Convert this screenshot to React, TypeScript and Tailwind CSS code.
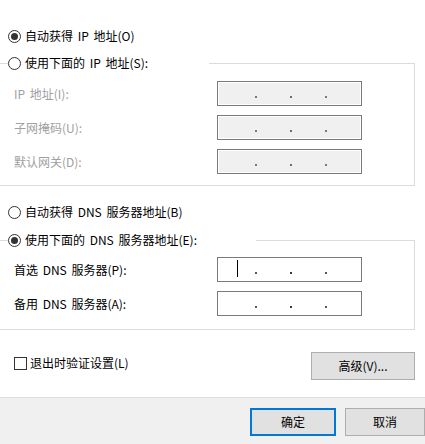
import React from "react";

function Radio({ checked }: { checked?: boolean }) {
  return (
    <span className="flex h-[13px] w-[13px] shrink-0 items-center justify-center rounded-full border border-[#333333] bg-white">
      {checked && <span className="h-[7px] w-[7px] rounded-full bg-[#333333]" />}
    </span>
  );
}

function RadioRow({ checked, label }: { checked?: boolean; label: string }) {
  return (
    <div className="flex h-[18px] items-center gap-[4px] bg-white text-[12px] leading-[18px] text-black">
      <Radio checked={checked} />
      <span className="[word-spacing:2px]">{label}</span>
    </div>
  );
}

function IPBox({ disabled, cursor }: { disabled?: boolean; cursor?: boolean }) {
  if (disabled) {
    return (
      <div className="h-[25px] w-[145px] border border-[#7a7a7a]">
        <div className="flex h-full w-full items-start border border-white bg-[#f0f0f0] pt-[13px]">
          <span className="ml-[36px] h-[2px] w-[2px] bg-[#6b7c8f]" />
          <span className="ml-[33px] h-[2px] w-[2px] bg-[#6b6b7c]" />
          <span className="ml-[33px] h-[2px] w-[2px] bg-[#6b7c8f]" />
        </div>
      </div>
    );
  }
  return (
    <div className="relative flex h-[25px] w-[145px] items-start border border-[#7a7a7a] bg-white pt-[14px]">
      {cursor && <span className="absolute left-[19px] top-[2px] h-[17px] w-[1px] bg-black" />}
      <span className="ml-[37px] h-[2px] w-[2px] bg-[#4a5a70]" />
      <span className="ml-[33px] h-[2px] w-[2px] bg-[#3a3050]" />
      <span className="ml-[33px] h-[2px] w-[2px] bg-[#4a5a70]" />
    </div>
  );
}

function FieldRow({
  label,
  disabled,
  cursor,
}: {
  label: string;
  disabled?: boolean;
  cursor?: boolean;
}) {
  return (
    <div className="flex items-center pl-[14px]">
      <span
        className={
          "w-[203px] text-[12px] leading-[18px] [word-spacing:2px] " +
          (disabled ? "text-[#a0a0a0]" : "text-black")
        }
      >
        {label}
      </span>
      <IPBox disabled={disabled} cursor={cursor} />
    </div>
  );
}

export default function App() {
  return (
    <div className="flex h-[444px] w-[425px] flex-col overflow-hidden bg-white font-['Microsoft_YaHei_UI','Noto_Sans_CJK_SC',sans-serif] text-[12px]">
      <div className="flex flex-1 flex-col">
        <div className="mt-[27px] pl-[8px]">
          <RadioRow checked label="自动获得 IP 地址(O)" />
        </div>

        <fieldset className="mt-[9px] w-[415px] border border-l-0 border-[#dcdcdc] px-0 pb-[11px] pt-0">
          <legend className="ml-[8px] w-[201px] p-0">
            <RadioRow label="使用下面的 IP 地址(S):" />
          </legend>
          <div className="flex flex-col gap-[9px] pt-[9px]">
            <FieldRow label="IP 地址(I):" disabled />
            <FieldRow label="子网掩码(U):" disabled />
            <FieldRow label="默认网关(D):" disabled />
          </div>
        </fieldset>

        <div className="mt-[17px] pl-[8px]">
          <RadioRow label="自动获得 DNS 服务器地址(B)" />
        </div>

        <fieldset className="mt-[10px] w-[415px] border border-l-0 border-[#dcdcdc] px-0 pb-[13px] pt-0">
          <legend className="ml-[8px] w-[248px] p-0">
            <RadioRow checked label="使用下面的 DNS 服务器地址(E):" />
          </legend>
          <div className="flex flex-col gap-[9px] pt-[8px]">
            <FieldRow label="首选 DNS 服务器(P):" cursor />
            <FieldRow label="备用 DNS 服务器(A):" />
          </div>
        </fieldset>

        <div className="mt-[22px] flex items-start justify-between pl-[14px] pr-[10px]">
          <div className="mt-[2px] flex h-[18px] items-center gap-[3px] text-[12px] leading-[18px] text-black">
            <span className="h-[13px] w-[13px] border border-[#333333] bg-white" />
            <span>退出时验证设置(L)</span>
          </div>
          <button className="flex h-[28px] w-[104px] items-center justify-center border border-[#adadad] bg-[#e1e1e1] text-[12px] text-black">
            高级(V)...
          </button>
        </div>
      </div>

      <div className="flex h-[47px] justify-end gap-[9px] border-t border-[#dfdfdf] bg-[#f0f0f0] pt-[10px]">
        <button className="flex h-[28px] w-[86px] items-center justify-center border-2 border-[#0078d7] bg-[#e1e1e1] text-[12px] text-black">
          确定
        </button>
        <button className="flex h-[28px] w-[80px] items-center justify-center border border-[#adadad] bg-[#e1e1e1] text-[12px] text-black">
          取消
        </button>
      </div>
    </div>
  );
}
